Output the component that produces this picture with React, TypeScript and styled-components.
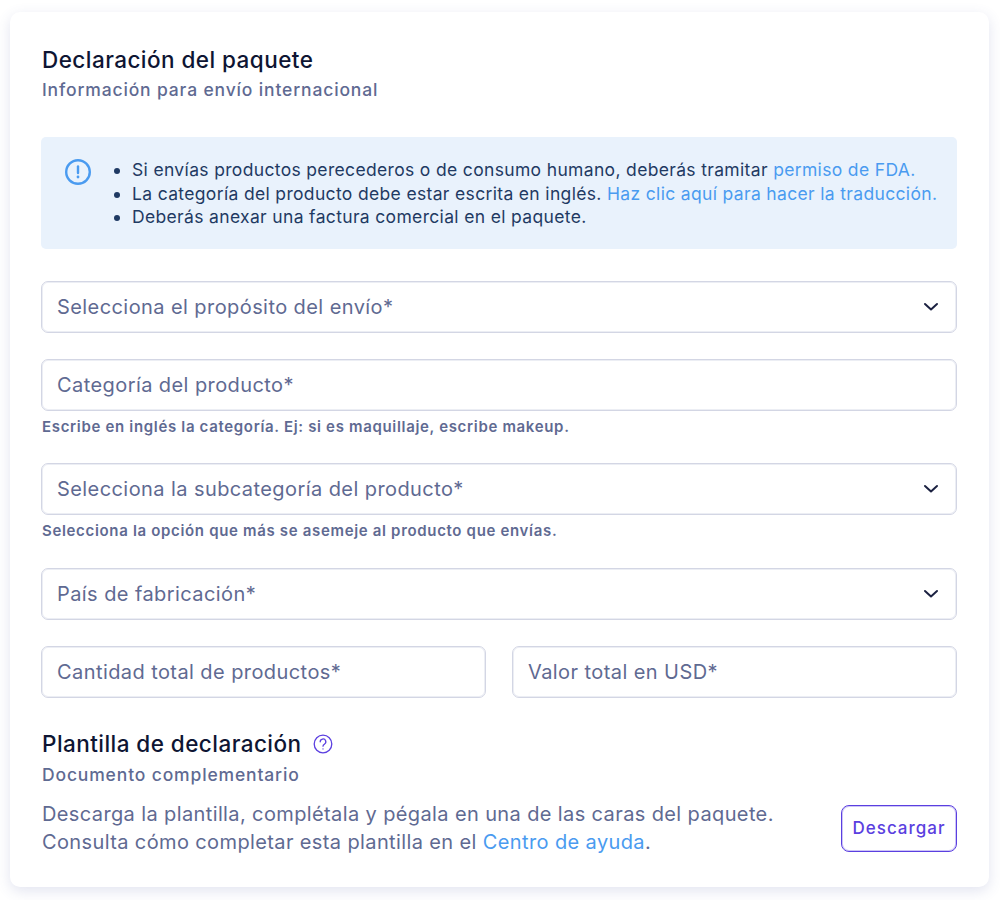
import React from 'react';
import styled, { createGlobalStyle } from 'styled-components';

const GlobalStyle = createGlobalStyle`
  html, body {
    margin: 0;
    padding: 0;
    background: #fff;
    font-family: Inter, "Liberation Sans", sans-serif;
  }
  * { box-sizing: border-box; }
`;

const Chevron = () => (
  <svg width="16" height="16" viewBox="0 0 16 16" fill="none" stroke="#1b2141" strokeWidth="2" strokeLinecap="round" strokeLinejoin="round">
    <path d="M2 5 8 10.5 14 5" />
  </svg>
);

const AlertIcon = () => (
  <svg width="26" height="26" viewBox="0 0 26 26" fill="none">
    <circle cx="13" cy="13" r="11.8" stroke="#4a9bf0" strokeWidth="2.4" />
    <path d="M13 7.5v6.5" stroke="#4a9bf0" strokeWidth="2.4" strokeLinecap="round" />
    <circle cx="13" cy="18" r="1.4" fill="#4a9bf0" />
  </svg>
);

const HelpIcon = () => (
  <svg width="20" height="20" viewBox="0 0 20 20" fill="none" stroke="#5b3fe0" strokeWidth="1.3" strokeLinecap="round">
    <circle cx="10" cy="10" r="8.8" />
    <path d="M7.2 7.8a2.8 2.8 0 1 1 4.2 2.4c-.9.5-1.4 1-1.4 2" />
    <path d="M10 14.8v.1" />
  </svg>
);

const App = () => (
  <>
    <GlobalStyle />
    <Page>
      <Card>
        <Title>Declaración del paquete</Title>
        <Subtitle>Información para envío internacional</Subtitle>

        <Notice>
          <NoticeIcon><AlertIcon /></NoticeIcon>
          <NoticeList>
            <li>Si envías productos perecederos o de consumo humano, deberás tramitar <TextLink href="#">permiso de FDA.</TextLink></li>
            <li>La categoría del producto debe estar escrita en inglés. <TextLink href="#">Haz clic aquí para hacer la traducción.</TextLink></li>
            <li>Deberás anexar una factura comercial en el paquete.</li>
          </NoticeList>
        </Notice>

        <Fields>
          <Field>
            <Control>
              <span>Selecciona el propósito del envío*</span>
              <Chevron />
            </Control>
          </Field>
          <Field>
            <Control>
              <span>Categoría del producto*</span>
            </Control>
            <Hint>Escribe en inglés la categoría. Ej: si es maquillaje, escribe makeup.</Hint>
          </Field>
          <Field>
            <Control>
              <span>Selecciona la subcategoría del producto*</span>
              <Chevron />
            </Control>
            <Hint>Selecciona la opción que más se asemeje al producto que envías.</Hint>
          </Field>
          <Field>
            <Control>
              <span>País de fabricación*</span>
              <Chevron />
            </Control>
          </Field>
          <TwoColumns>
            <Control>
              <span>Cantidad total de productos*</span>
            </Control>
            <Control>
              <span>Valor total en USD*</span>
            </Control>
          </TwoColumns>
        </Fields>

        <TemplateHeading>
          <SectionTitle>Plantilla de declaración</SectionTitle>
          <HelpIcon />
        </TemplateHeading>
        <SectionSubtitle>Documento complementario</SectionSubtitle>
        <TemplateRow>
          <TemplateText>
            Descarga la plantilla, complétala y pégala en una de las caras del paquete.<br />
            Consulta cómo completar esta plantilla en el <TextLink href="#">Centro de ayuda</TextLink>.
          </TemplateText>
          <DownloadButton type="button">Descargar</DownloadButton>
        </TemplateRow>
      </Card>
    </Page>
  </>
);

const Page = styled.div`
  width: 1000px;
  height: 900px;
  padding: 12px 11px 13px 10px;
`;

const Card = styled.div`
  height: 875px;
  padding: 36px 32px 0 31px;
  background: #fff;
  border-radius: 10px;
  box-shadow: 0 4px 14px rgba(75, 90, 160, 0.16);
`;

const Title = styled.h1`
  margin: 0 0 0 1px;
  font-size: 22.5px;
  line-height: 24px;
  font-weight: 500;
  letter-spacing: 0.45px;
  color: #0e1533;
`;

const Subtitle = styled.p`
  margin: 7px 0 0 1px;
  font-size: 17.5px;
  line-height: 22px;
  font-weight: 500;
  letter-spacing: 0.85px;
  color: #5f6a92;
`;

const Notice = styled.div`
  display: flex;
  height: 112px;
  margin-top: 36px;
  padding: 21px 0 0 24px;
  background: #e9f2fc;
  border-radius: 5px;
`;

const NoticeIcon = styled.div`
  flex: none;
  width: 26px;
  height: 26px;
  margin: 1px 24px 0 0;
`;

const NoticeList = styled.ul`
  margin: 0;
  padding: 0 0 0 17px;
  font-size: 17.5px;
  line-height: 23.5px;
  letter-spacing: 0.34px;
  color: #1f3a63;
`;

const TextLink = styled.a`
  color: #4a9bf0;
  text-decoration: none;
`;

const Fields = styled.div`
  display: flex;
  flex-direction: column;
  gap: 26px;
  margin-top: 31.8px;
`;

const Field = styled.div`
  display: flex;
  flex-direction: column;
`;

const Control = styled.div`
  display: flex;
  align-items: center;
  justify-content: space-between;
  height: 52px;
  padding: 0 17px 0 15px;
  background: #fff;
  border: 1px solid #d3d6e4;
  box-shadow: inset 0 0 0 1px #eceef4;
  border-radius: 7px;
  font-size: 20px;
  letter-spacing: 0.42px;
  color: #5f6a92;
`;

const Hint = styled.div`
  margin: 6px 0 0 1px;
  font-size: 15px;
  line-height: 20.5px;
  font-weight: 600;
  letter-spacing: 0.67px;
  color: #5f6a92;
`;

const TwoColumns = styled.div`
  display: grid;
  grid-template-columns: 1fr 1fr;
  gap: 26px;
`;

const TemplateHeading = styled.div`
  display: flex;
  align-items: center;
  gap: 11px;
  margin: 32px 0 0 1px;
`;

const SectionTitle = styled.h2`
  margin: 0;
  font-size: 22.5px;
  line-height: 28px;
  font-weight: 500;
  letter-spacing: 0.45px;
  color: #0e1533;
`;

const SectionSubtitle = styled.p`
  margin: 6px 0 0 1px;
  font-size: 17.5px;
  line-height: 22px;
  font-weight: 500;
  letter-spacing: 0.85px;
  color: #5f6a92;
`;

const TemplateRow = styled.div`
  display: flex;
  align-items: center;
  justify-content: space-between;
  margin: 14px 0 0 1px;
`;

const TemplateText = styled.p`
  margin: 0;
  font-size: 20px;
  line-height: 28px;
  letter-spacing: 0.38px;
  color: #5f6a92;
`;

const DownloadButton = styled.button`
  width: 116px;
  height: 47px;
  margin-top: 1px;
  padding: 0;
  background: #fff;
  border: 1px solid #5b3fe0;
  box-shadow: inset 0 0 0 1px rgba(91, 63, 224, 0.3);
  border-radius: 8px;
  font-family: inherit;
  font-size: 17px;
  font-weight: 500;
  letter-spacing: 1px;
  color: #5b3fe0;
`;

export default App;
